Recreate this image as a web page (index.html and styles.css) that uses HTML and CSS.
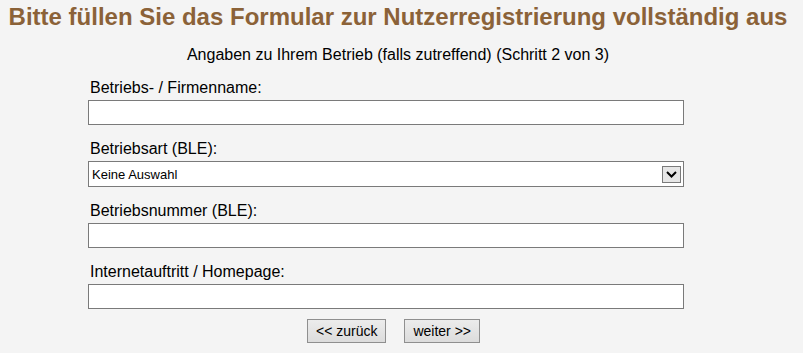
FILE: index.html
```html
<!DOCTYPE html>
<html lang="de">
<head>
    <meta charset="UTF-8">
    <meta name="viewport" content="width=device-width, initial-scale=1.0">
    <title>Nutzerregistrierung</title>
    <link rel="stylesheet" href="styles.css">
</head>
<body>
    <h1 class="titel">Bitte füllen Sie das Formular zur Nutzerregistrierung vollständig aus</h1>
    <p class="schritt">Angaben zu Ihrem Betrieb (falls zutreffend) (Schritt 2 von 3)</p>

    <form class="formular" action="#" method="POST">
        <div class="feld">
            <label for="firma">Betriebs- / Firmenname:</label>
            <input type="text" id="firma" name="firma">
        </div>

        <div class="feld">
            <label for="art">Betriebsart (BLE):</label>
            <div class="auswahl">
                <select id="art" name="art">
                    <option>Keine Auswahl</option>
                </select>
                <span class="pfeil">
                    <svg width="11" height="7" viewBox="0 0 11 7">
                        <path d="M1 1 L5.5 5.5 L10 1" fill="none" stroke="#000" stroke-width="2"/>
                    </svg>
                </span>
            </div>
        </div>

        <div class="feld">
            <label for="nummer">Betriebsnummer (BLE):</label>
            <input type="text" id="nummer" name="nummer">
        </div>

        <div class="feld">
            <label for="homepage">Internetauftritt / Homepage:</label>
            <input type="text" id="homepage" name="homepage">
        </div>

        <div class="knoepfe">
            <button type="button">&lt;&lt; zurück</button>
            <button type="submit">weiter &gt;&gt;</button>
        </div>
    </form>
</body>
</html>
```

FILE: styles.css
```css
body {
    background-color: #f4f4f4;
    color: #000000;
    font-family: "Liberation Sans", Arial, sans-serif;
    margin: 0;
    padding: 0;
}

.titel {
    color: #8b6238; /* Braun */
    font-size: 24px;
    font-weight: bold;
    text-align: center;
    margin: 3px 0 0 0;
    padding-right: 7px;
    line-height: 27px;
}

.schritt {
    font-size: 16px;
    line-height: 18px;
    text-align: center;
    margin: 16px 0 0 0;
    padding-right: 7px;
}

.formular {
    width: 596px;
    margin: 15px 0 0 88px;
}

.feld {
    display: flex;
    flex-direction: column;
    margin-bottom: 15px;
}

.feld label {
    font-size: 16px;
    line-height: 18px;
    padding-left: 2px;
    margin-bottom: 3px;
}

.feld input {
    box-sizing: border-box;
    width: 596px;
    height: 25px;
    margin: 0;
    border: 1px solid #7a7a7a;
    background-color: #ffffff;
    font-family: "Liberation Sans", Arial, sans-serif;
    font-size: 13px;
}

.auswahl {
    position: relative;
    width: 596px;
    height: 26px;
}

.auswahl select {
    appearance: none;
    box-sizing: border-box;
    width: 100%;
    height: 26px;
    margin: 0;
    padding: 0 0 0 3px;
    border: 1px solid #7a7a7a;
    border-radius: 0;
    background-color: #ffffff;
    color: #000000;
    font-family: "Liberation Sans", Arial, sans-serif;
    font-size: 13px;
}

.pfeil {
    position: absolute;
    top: 5px;
    right: 3px;
    box-sizing: border-box;
    width: 19px;
    height: 17px;
    border: 1px solid #7a7a7a;
    background-color: #e6e6e6;
    display: flex;
    align-items: center;
    justify-content: center;
    pointer-events: none;
}

.knoepfe {
    display: flex;
    justify-content: center;
    gap: 18px;
    margin-top: -5px;
    padding-left: 15px;
}

.knoepfe button {
    height: 24px;
    padding: 0 8px;
    border: 1px solid #8f8f8f;
    border-radius: 0;
    background: linear-gradient(#ececec, #dcdcdc);
    color: #000000;
    font-family: "Liberation Sans", Arial, sans-serif;
    font-size: 14px;
    cursor: pointer;
}
```
